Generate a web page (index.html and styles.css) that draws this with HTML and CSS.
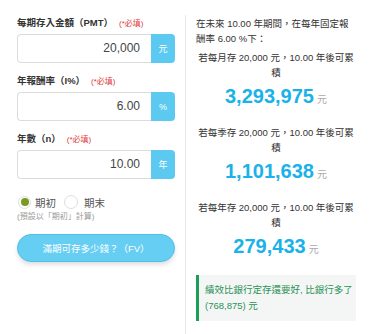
FILE: index.html
```html
<!DOCTYPE html>
<html>
<head>
<meta charset="utf-8">
<link rel="stylesheet" href="styles.css">
</head>
<body>
<div class="page">
  <div class="form">
    <div class="label">每期存入金額（PMT）<span class="req">(*必填)</span></div>
    <div class="group">
      <div class="input">20,000</div>
      <div class="addon">元</div>
    </div>
    <div class="label">年報酬率（I%）<span class="req">(*必填)</span></div>
    <div class="group">
      <div class="input">6.00</div>
      <div class="addon">%</div>
    </div>
    <div class="label">年數（n）<span class="req">(*必填)</span></div>
    <div class="group">
      <div class="input">10.00</div>
      <div class="addon">年</div>
    </div>
    <div class="radios">
      <span class="radio checked"></span><span class="rlabel">期初</span>
      <span class="radio second"></span><span class="rlabel">期末</span>
    </div>
    <div class="hint">(預設以「期初」計算)</div>
    <div class="btn">滿期可存多少錢？（FV）</div>
  </div>
  <div class="result">
    <p class="intro">在未來 10.00 年期間，在每年固定報酬率 6.00 %下：</p>
    <div class="block">
      <p class="desc">若每月存 20,000 元，10.00 年後可累積</p>
      <div class="num">3,293,975<span class="unit">元</span></div>
    </div>
    <div class="block">
      <p class="desc">若每季存 20,000 元，10.00 年後可累積</p>
      <div class="num">1,101,638<span class="unit">元</span></div>
    </div>
    <div class="block">
      <p class="desc">若每年存 20,000 元，10.00 年後可累積</p>
      <div class="num">279,433<span class="unit">元</span></div>
    </div>
    <div class="note">績效比銀行定存還要好, 比銀行多了 (768,875) 元</div>
  </div>
</div>
</body>
</html>
```

FILE: styles.css
```css
* { box-sizing: border-box; }
body {
  margin: 0;
  background: #fff;
  font-family: "Liberation Sans", "Noto Sans CJK TC", sans-serif;
  color: #333;
}
.page {
  display: flex;
  align-items: stretch;
  margin-top: 15px;
}
.form {
  width: 185px;
  padding: 1px 10px 0 17px;
  display: flex;
  flex-direction: column;
}
.label {
  font-size: 9.5px;
  font-weight: bold;
  line-height: 14px;
  color: #333;
  margin-bottom: 3px;
}
.req {
  font-size: 8px;
  font-weight: normal;
  color: #e03a3a;
  margin-left: 6px;
}
.group {
  display: flex;
  height: 29px;
  margin-bottom: 11px;
}
.input {
  flex: 1;
  border: 1px solid #dcdcdc;
  border-right: none;
  border-radius: 4px 0 0 4px;
  font-size: 12px;
  color: #444;
  text-align: right;
  padding-right: 11px;
  line-height: 27px;
}
.addon {
  width: 24px;
  background: #5ccaf0;
  border-radius: 0 4px 4px 0;
  color: #fff;
  font-size: 9px;
  display: flex;
  align-items: center;
  justify-content: center;
}
.radios {
  display: flex;
  align-items: center;
  height: 16px;
  margin-top: 4px;
  font-size: 10.5px;
  color: #555;
}
.radio {
  width: 13px;
  height: 13px;
  border-radius: 50%;
  border: 1px solid #dedede;
  display: flex;
  align-items: center;
  justify-content: center;
  margin-left: 1px;
}
.radio.checked::after {
  content: "";
  width: 8px;
  height: 8px;
  border-radius: 50%;
  background: #7a9a22;
}
.radio.second { width: 14px; height: 14px; margin-left: 8px; }
.rlabel { margin-left: 4px; }
.rlabel:last-child { margin-left: 6px; }
.hint {
  font-size: 8px;
  color: #999;
  line-height: 12px;
  margin-top: 1px;
}
.btn {
  margin-top: 11px;
  height: 28px;
  border-radius: 14px;
  background: #66cef2;
  border: 1px solid #4cc0ea;
  box-shadow: 0 3px 4px rgba(0,0,0,0.12);
  color: #fff;
  font-size: 9.5px;
  display: flex;
  align-items: center;
  justify-content: center;
}
.result {
  width: 193px;
  border-left: 1px solid #e8e8e8;
  padding: 1px 22px 13px 10px;
  font-size: 9.5px;
  line-height: 15px;
  color: #333;
}
.result p { margin: 0; }
.block { text-align: center; margin-top: 3.5px; }
.block + .block { margin-top: 11.5px; }
.num {
  margin-top: 3.5px;
  font-size: 20px;
  font-weight: bold;
  line-height: 26px;
  color: #1ab2e8;
}
.unit {
  font-size: 10px;
  font-weight: normal;
  color: #aaa;
  margin-left: 3px;
}
.note {
  margin-top: 11.5px;
  background: #f4f6f6;
  border-left: 3px solid #1a9f55;
  padding: 7px 0 7px 6px;
  color: #2a9256;
  font-size: 9.5px;
  line-height: 16px;
}
```
